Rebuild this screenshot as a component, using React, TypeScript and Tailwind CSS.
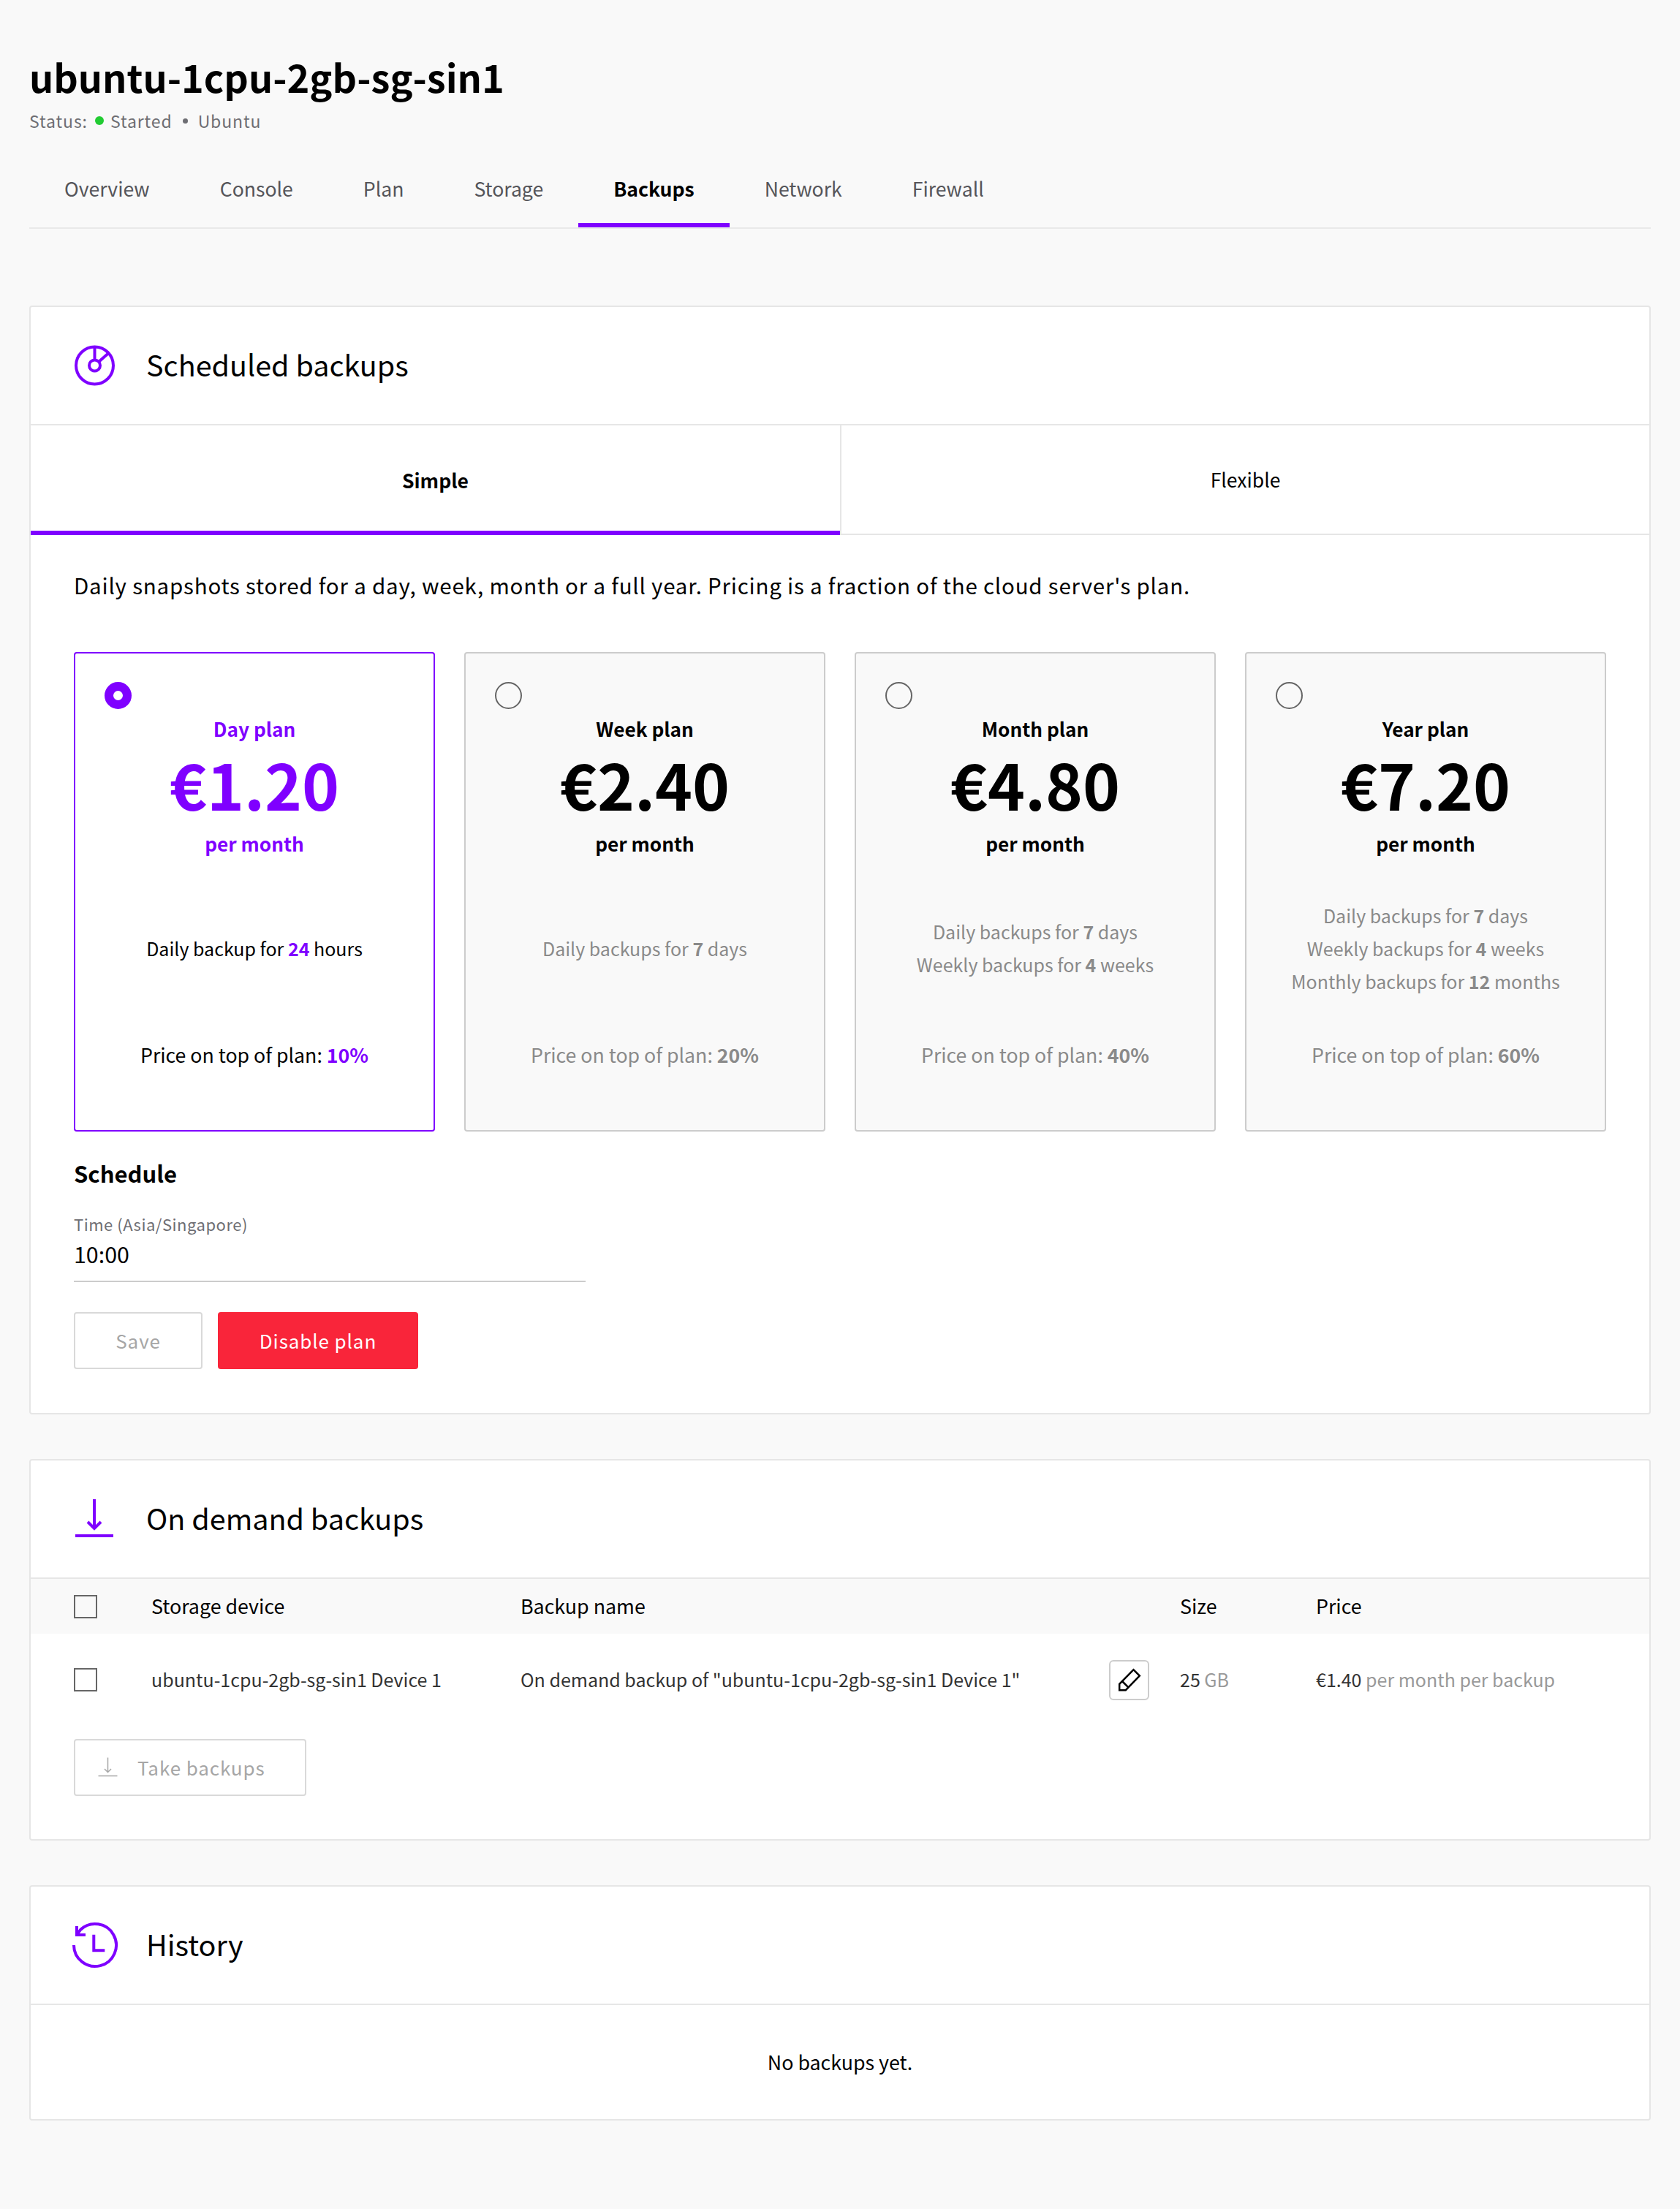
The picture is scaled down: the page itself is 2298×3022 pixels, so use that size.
import React from "react";

const FONT = '"Noto Sans CJK SC", "Noto Sans", sans-serif';

function Card({ children }: { children: React.ReactNode }) {
  return <section className="bg-white border-2 border-[#e6e6e6] rounded-[4px]">{children}</section>;
}

function CardHeader({ icon, title }: { icon: React.ReactNode; title: string }) {
  return (
    <div className="h-[162px] flex items-center pl-[56px] border-b-2 border-[#e6e6e6]">
      <div className="w-[102px] flex items-center">{icon}</div>
      <h2 className="text-[39.5px] leading-[60px] font-normal text-black pb-[4px]">{title}</h2>
    </div>
  );
}

function ScheduleIcon() {
  return (
    <svg width="64" height="64" viewBox="0 0 64 64" fill="none" stroke="#7f00ff" strokeWidth="4">
      <circle cx="31.500" cy="32" r="25.500" />
      <circle cx="31.500" cy="32" r="7.500" />
      <path d="M31.500 6.500V24.500M37 27L50 15.500" />
    </svg>
  );
}

function DownloadIcon({ color = "#7f00ff", scale = 1, sw = 4 }: { color?: string; scale?: number; sw?: number }) {
  return (
    <svg width={64 * scale} height={64 * scale} viewBox="0 0 64 64" fill="none" stroke={color} strokeWidth={sw}>
      <path d="M31 5V45M22 36L31 45L40 36" />
      <path d="M5 55H57" />
    </svg>
  );
}

function HistoryIcon() {
  return (
    <svg width="64" height="64" viewBox="0 0 64 64" fill="none" stroke="#7f00ff" strokeWidth="4">
      <path d="M3 32A29 29 0 1 0 12 11L7 18" />
      <path d="M7 6V18H19" />
      <path d="M30.300 17.700V39.300H45.300" />
    </svg>
  );
}

function PencilIcon() {
  return (
    <svg width="32" height="32" viewBox="0 0 32 32" fill="none" stroke="#000000" strokeWidth="2.500" strokeLinejoin="miter">
      <path d="M2.200 21.800V30.200H10.800L29.800 10.500L21.500 2.200Z" />
      <path d="M6.500 18.500L14.200 26.200" />
    </svg>
  );
}

type Plan = { name: string; price: string; lines: React.ReactNode[]; pct: string; active?: boolean };

function B({ children, active }: { children: React.ReactNode; active?: boolean }) {
  return <b className={active ? "font-bold text-[#7f00ff]" : "font-bold"}>{children}</b>;
}

const plans: Plan[] = [
  { name: "Day plan", price: "€1.20", active: true, pct: "10%", lines: [<>Daily backup for <B active>24</B> hours</>] },
  { name: "Week plan", price: "€2.40", pct: "20%", lines: [<>Daily backups for <B>7</B> days</>] },
  { name: "Month plan", price: "€4.80", pct: "40%", lines: [<>Daily backups for <B>7</B> days</>, <>Weekly backups for <B>4</B> weeks</>] },
  { name: "Year plan", price: "€7.20", pct: "60%", lines: [<>Daily backups for <B>7</B> days</>, <>Weekly backups for <B>4</B> weeks</>, <>Monthly backups for <B>12</B> months</>] },
];

function PlanCard({ p }: { p: Plan }) {
  const a = !!p.active;
  return (
    <div className={`h-[656px] rounded-[4px] border-2 flex flex-col items-center px-[40px] pt-[39px] ${a ? "bg-white border-[#7f00ff]" : "bg-[#f9f9f9] border-[#cccccc]"}`}>
      <div className="self-start h-[37px]">
        {a ? (
          <div className="w-[37px] h-[37px] rounded-full border-[12px] border-[#7f00ff] bg-white" />
        ) : (
          <div className="w-[37px] h-[37px] rounded-full border-2 border-[#666666]" />
        )}
      </div>
      <div className={`mt-[7px] text-[26.2px] leading-[40px] font-semibold ${a ? "text-[#7f00ff]" : "text-black"}`}>{p.name}</div>
      <div className={`mt-[5px] text-[86.5px] leading-[100px] font-semibold ${a ? "text-[#7f00ff]" : "text-black"}`}>{p.price}</div>
      <div className={`mt-[12px] text-[26.2px] leading-[40px] font-semibold ${a ? "text-[#7f00ff]" : "text-black"}`}>per month</div>
      <div className={`mt-[28px] h-[190px] flex flex-col justify-center items-center whitespace-nowrap text-[25px] leading-[45px] ${a ? "text-black" : "text-[#8a8a8a]"}`}>
        {p.lines.map((l, i) => (
          <div key={i}>{l}</div>
        ))}
      </div>
      <div className={`mt-[31px] whitespace-nowrap text-[26.7px] leading-[40px] ${a ? "text-black" : "text-[#8a8a8a]"}`}>
        Price on top of plan: <B active={a}>{p.pct}</B>
      </div>
    </div>
  );
}

const tabs = ["Overview", "Console", "Plan", "Storage", "Backups", "Network", "Firewall"];

const rowGrid = "grid grid-cols-[106px_505px_805px_97px_186px_1fr] pl-[59px] items-center leading-[40px]";

export default function App() {
  return (
    <div className="min-h-[3022px] bg-[#f9f9f9] px-[40px] pt-[66px]" style={{ fontFamily: FONT }}>
      <h1 className="text-[52.2px] leading-[76px] font-semibold text-black">ubuntu-1cpu-2gb-sg-sin1</h1>
      <div className="mt-[7px] h-[32px] flex items-center text-[23px] leading-[32px] tracking-[0.9px] text-[#6e6e73]">
        <span>Status:</span>
        <span className="ml-[10px] mr-[9px] w-[12px] h-[12px] rounded-full bg-[#22cc33]" />
        <span>Started</span>
        <span className="ml-[14px] mr-[14px] w-[7px] h-[7px] rounded-full bg-[#6e6e73]" />
        <span>Ubuntu</span>
      </div>
      <nav className="mt-[26px] flex border-b-2 border-[#e9e9e9]">
        {tabs.map((t) => (
          <div
            key={t}
            className={`h-[104px] px-[48px] pb-[2px] flex items-center text-[26.6px] leading-[40px] border-b-[6px] border-t-[6px] border-t-transparent ${t === "Backups" ? "border-b-[#7f00ff] font-semibold text-black" : "border-b-transparent text-[#55555a]"}`}
          >
            {t}
          </div>
        ))}
      </nav>

      <div className="mt-[105px] flex flex-col gap-[61px]">
        <Card>
          <CardHeader icon={<ScheduleIcon />} title="Scheduled backups" />
          <div className="grid grid-cols-2 border-b-2 border-[#e6e6e6]">
            <div className="h-[150px] flex items-center justify-center text-[26.5px] font-semibold text-black border-b-[6px] border-t-[6px] border-t-transparent border-b-[#7f00ff] -mb-[2px]">Simple</div>
            <div className="h-[148px] flex items-center justify-center text-[26.5px] text-black border-l-2 border-[#e6e6e6]">Flexible</div>
          </div>
          <div className="pl-[59px] pr-[59px]">
            <p className="mt-[46px] text-[29.5px] leading-[44px] tracking-[0.8px] text-black">
              Daily snapshots stored for a day, week, month or a full year. Pricing is a fraction of the cloud server's plan.
            </p>
            <div className="mt-[70px] grid grid-cols-4 gap-[40px]">
              {plans.map((p) => (
                <PlanCard key={p.name} p={p} />
              ))}
            </div>
            <h3 className="mt-[35px] text-[31px] leading-[44px] font-bold text-black">Schedule</h3>
            <div className="mt-[31px] w-[700px] border-b-2 border-[#cccccc] pb-[17px]">
              <div className="text-[22px] leading-[32px] tracking-[0.5px] text-[#6e6e73]">Time (Asia/Singapore)</div>
              <div className="mt-[5px] text-[30.4px] leading-[40px] text-black">10:00</div>
            </div>
            <div className="mt-[41px] flex gap-[21px]">
              <button className="w-[176px] h-[78px] pb-[2px] rounded-[4px] border-2 border-[#d9d9d9] bg-white text-[26px] tracking-[0.9px] text-[#a6a6a6]">Save</button>
              <button className="w-[274px] h-[78px] pb-[2px] rounded-[4px] bg-[#f9253a] text-[26px] tracking-[0.9px] text-white">Disable plan</button>
            </div>
            <div className="h-[60px]" />
          </div>
        </Card>

        <Card>
          <CardHeader icon={<DownloadIcon />} title="On demand backups" />
          <div className={`${rowGrid} h-[75px] bg-[#f9f9f9] text-[26.8px] text-black`}>
            <div className="w-[32px] h-[32px] border-2 border-[#666666]" />
            <div className="pb-[2px]">Storage device</div>
            <div className="pb-[2px]">Backup name</div>
            <div />
            <div className="pb-[2px]">Size</div>
            <div className="pb-[2px]">Price</div>
          </div>
          <div className={`${rowGrid} h-[126px] text-[25px] text-[#333333]`}>
            <div className="w-[32px] h-[32px] border-2 border-[#666666]" />
            <div className="whitespace-nowrap pb-[2px]">ubuntu-1cpu-2gb-sg-sin1 Device 1</div>
            <div className="whitespace-nowrap pb-[2px]">On demand backup of "ubuntu-1cpu-2gb-sg-sin1 Device 1"</div>
            <button className="w-[55px] h-[55px] rounded-[6px] border-2 border-[#cccccc] bg-white flex items-center justify-center">
              <PencilIcon />
            </button>
            <div className="pb-[2px]">25 <span className="text-[#999999]">GB</span></div>
            <div className="whitespace-nowrap pb-[2px]">€1.40 <span className="text-[#999999]">per month per backup</span></div>
          </div>
          <div className="pl-[59px] mt-[18px]">
            <button className="w-[318px] h-[78px] rounded-[4px] border-2 border-[#d9d9d9] bg-white flex items-center pl-[29px] text-[26px] tracking-[0.9px] text-[#a6a6a6]">
              <DownloadIcon color="#a6a6a6" scale={0.5} sw={3} />
              <span className="ml-[24px] pb-[2px]">Take backups</span>
            </button>
          </div>
          <div className="h-[59px]" />
        </Card>

        <Card>
          <CardHeader icon={<HistoryIcon />} title="History" />
          <div className="h-[156px] flex items-center justify-center text-[26.8px] text-black">No backups yet.</div>
        </Card>
      </div>
    </div>
  );
}
